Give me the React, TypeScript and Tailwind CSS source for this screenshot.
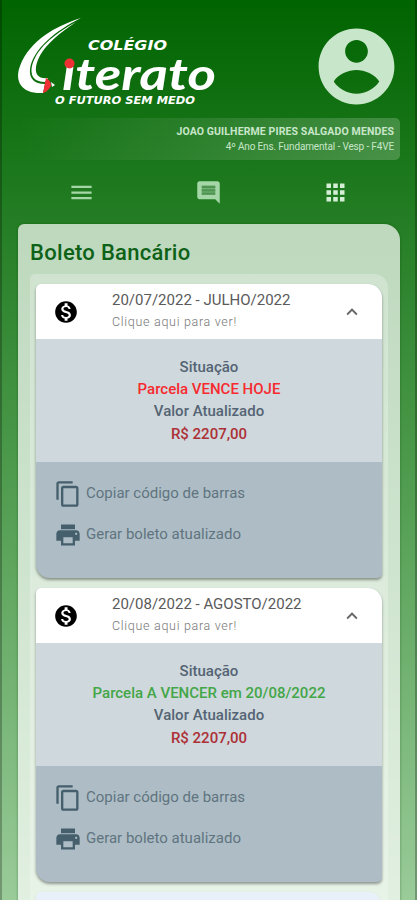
import { MdApps, MdContentCopy, MdExpandLess, MdMenu, MdMonetizationOn, MdPrint } from 'react-icons/md'

type Boleto = {
  title: string
  status: string
  statusColor: string
  value: string
}

const boletos: Boleto[] = [
  { title: '20/07/2022 - JULHO/2022', status: 'Parcela VENCE HOJE', statusColor: 'text-[#f62a2f]', value: 'R$ 2207,00' },
  { title: '20/08/2022 - AGOSTO/2022', status: 'Parcela A VENCER em 20/08/2022', statusColor: 'text-[#43a648]', value: 'R$ 2207,00' },
]

function Logo() {
  return (
    <svg className="block h-[118px] w-[230px] shrink-0" viewBox="0 0 230 118" fill="#fff">
      {/* Pen stroke that forms the initial */}
      <path d="M81 18C56 26 30 40 20 66C14 82 22 94 43 93L45 84C34 84 29 78 30 69C33 49 55 31 81 18Z" />
      <path d="M76 22C54 34 34 50 31.500 69C31 77 35 82 45 82L48 78C39 79 35 75 36 67C39 49 57 35 76 22Z" />
      <path d="M43 93L46 78C50 80 51 83 51 86C49 89 47 92 43 93Z" fill="#ef3035" />
      <path d="M51 82L55 85L52 87Z" />
      <text x="88" y="50" fontSize="14" fontWeight="700" fontStyle="italic" fontFamily="DejaVu Sans, sans-serif" textLength="79" lengthAdjust="spacingAndGlyphs">COLÉGIO</text>
      <text x="62" y="90" fontSize="44" fontWeight="700" fontStyle="italic" fontFamily="Lato, sans-serif" textLength="154" lengthAdjust="spacingAndGlyphs">ıterato</text>
      <circle cx="69.500" cy="63.500" r="5" fill="#ef3035" />
      <text x="55" y="104" fontSize="10" fontWeight="700" fontStyle="italic" fontFamily="DejaVu Sans, sans-serif" textLength="140" lengthAdjust="spacingAndGlyphs">O FUTURO SEM MEDO</text>
    </svg>
  )
}

function Avatar() {
  return (
    <svg className="mt-[21px] size-[91px] shrink-0 text-[#c8e6c9]" viewBox="0 0 24 24" fill="currentColor">
      <path d="M12 2C6.480 2 2 6.480 2 12s4.480 10 10 10 10-4.480 10-10S17.520 2 12 2zm0 3c1.660 0 3 1.340 3 3s-1.340 3-3 3-3-1.340-3-3 1.340-3 3-3zM12 19.200c-2.500 0-4.710-1.280-6-3.220C7 14 10 12.900 12 12.900c2 0 5 1.100 6 3.080-1.290 1.940-3.500 3.220-6 3.220z" />
    </svg>
  )
}

function CommentIcon() {
  return (
    <svg className="size-[27px]" viewBox="0 0 24 24" fill="currentColor">
      <path d="M22 4c0-1.100-.900-2-2-2H4c-1.100 0-2 .900-2 2v12c0 1.100.900 2 2 2h14l4 4V4z" />
      <path d="M6 6h12v8H6z" fill="#72b073" />
      <path d="M6 6h12v2H6zM6 9h12v2H6zM6 12h12v2H6z" fill="#4f9450" />
    </svg>
  )
}

function Header() {
  return (
    <header>
      <div className="flex h-[118px] justify-between pr-[15px]">
        <Logo />
        <Avatar />
      </div>
      <div className="mr-[17px] ml-[18px] flex h-[42px] flex-col items-end justify-center rounded-[5px] bg-linear-to-r/srgb from-white/0 to-white/20 pr-[6px] text-[#c8e6c9]">
        <span className="text-[10.500px] leading-[15px] font-bold tracking-[0.12px]">JOAO GUILHERME PIRES SALGADO MENDES</span>
        <span className="text-[10px] leading-[15px] tracking-[-0.14px]">4º Ano Ens. Fundamental - Vesp - F4VE</span>
      </div>
      <nav className="flex h-16 items-center justify-around px-[18px] text-[#a5d6a7]">
        <MdMenu className="size-[27px]" />
        <CommentIcon />
        <MdApps className="size-[27px] text-[#d5efd6]" />
      </nav>
    </header>
  )
}

function BoletoCard({ boleto }: { boleto: Boleto }) {
  return (
    <article className="h-[294px] overflow-hidden rounded-tl-[5px] rounded-tr-[14px] rounded-br-[5px] rounded-bl-[14px] bg-[#aebdc5] shadow-[0_2px_3px_rgba(0,0,0,0.38)]">
      <div className="flex h-[55px] items-center bg-white pr-[17px] pl-[17px]">
        <MdMonetizationOn className="size-[26px] shrink-0 text-black" />
        <div className="-mt-[2px] ml-[33px] flex-1 whitespace-nowrap">
          <h2 className="text-[15px] leading-[22px] text-[#5a5a5a]">{boleto.title}</h2>
          <p className="text-[12.500px] leading-[21px] font-light tracking-[0.7px] text-[#777]">Clique aqui para ver!</p>
        </div>
        <MdExpandLess className="mr-[2px] size-[22px] text-[#666]" />
      </div>
      <div className="flex h-[123px] flex-col items-center bg-[#cfd8dc] pt-[16.500px] text-[15px] leading-[22.400px] font-medium text-[#546474]">
        <span>Situação</span>
        <span className={boleto.statusColor}>{boleto.status}</span>
        <span>Valor Atualizado</span>
        <span className="text-[#ad3037]">{boleto.value}</span>
      </div>
      <div className="flex flex-col gap-3 pt-[17px] pl-[18px] text-[15px] text-[#607480]">
        <button className="flex h-[29px] items-center gap-[4px]">
          <MdContentCopy className="size-7 text-[#455f6c]" />
          Copiar código de barras
        </button>
        <button className="flex h-[29px] items-center gap-[4px]">
          <MdPrint className="size-7 text-[#455f6c]" />
          Gerar boleto atualizado
        </button>
      </div>
    </article>
  )
}

export default function App() {
  return (
    <div className="h-[900px] overflow-hidden border-x-2 border-black/25 bg-linear-to-b/srgb from-[#006400] via-[#4a984a] to-[#9acb99] bg-origin-border font-[Roboto,sans-serif]">
      <div className="-mx-[2px]">
        <Header />
        <main className="mr-[17px] ml-[18px] h-[720px] rounded-tl-[6px] rounded-tr-[16px] bg-white/70 px-3 pt-[14px] shadow-[0_0_3px_rgba(0,70,0,0.4)]">
          <h1 className="text-[22px] leading-[30px] font-medium tracking-[0.3px] text-[#0e6218]">Boleto Bancário</h1>
          <div className="mt-[6px] flex h-[700px] flex-col gap-[10px] rounded-tl-[5px] rounded-tr-[14px] bg-white/25 pt-[10px] pr-[6px] pl-[6px]">
            {boletos.map((boleto) => (
              <BoletoCard key={boleto.title} boleto={boleto} />
            ))}
            <div className="h-20 rounded-tl-[5px] rounded-tr-[14px] bg-[#e8f1fa] shadow" />
          </div>
        </main>
      </div>
    </div>
  )
}
